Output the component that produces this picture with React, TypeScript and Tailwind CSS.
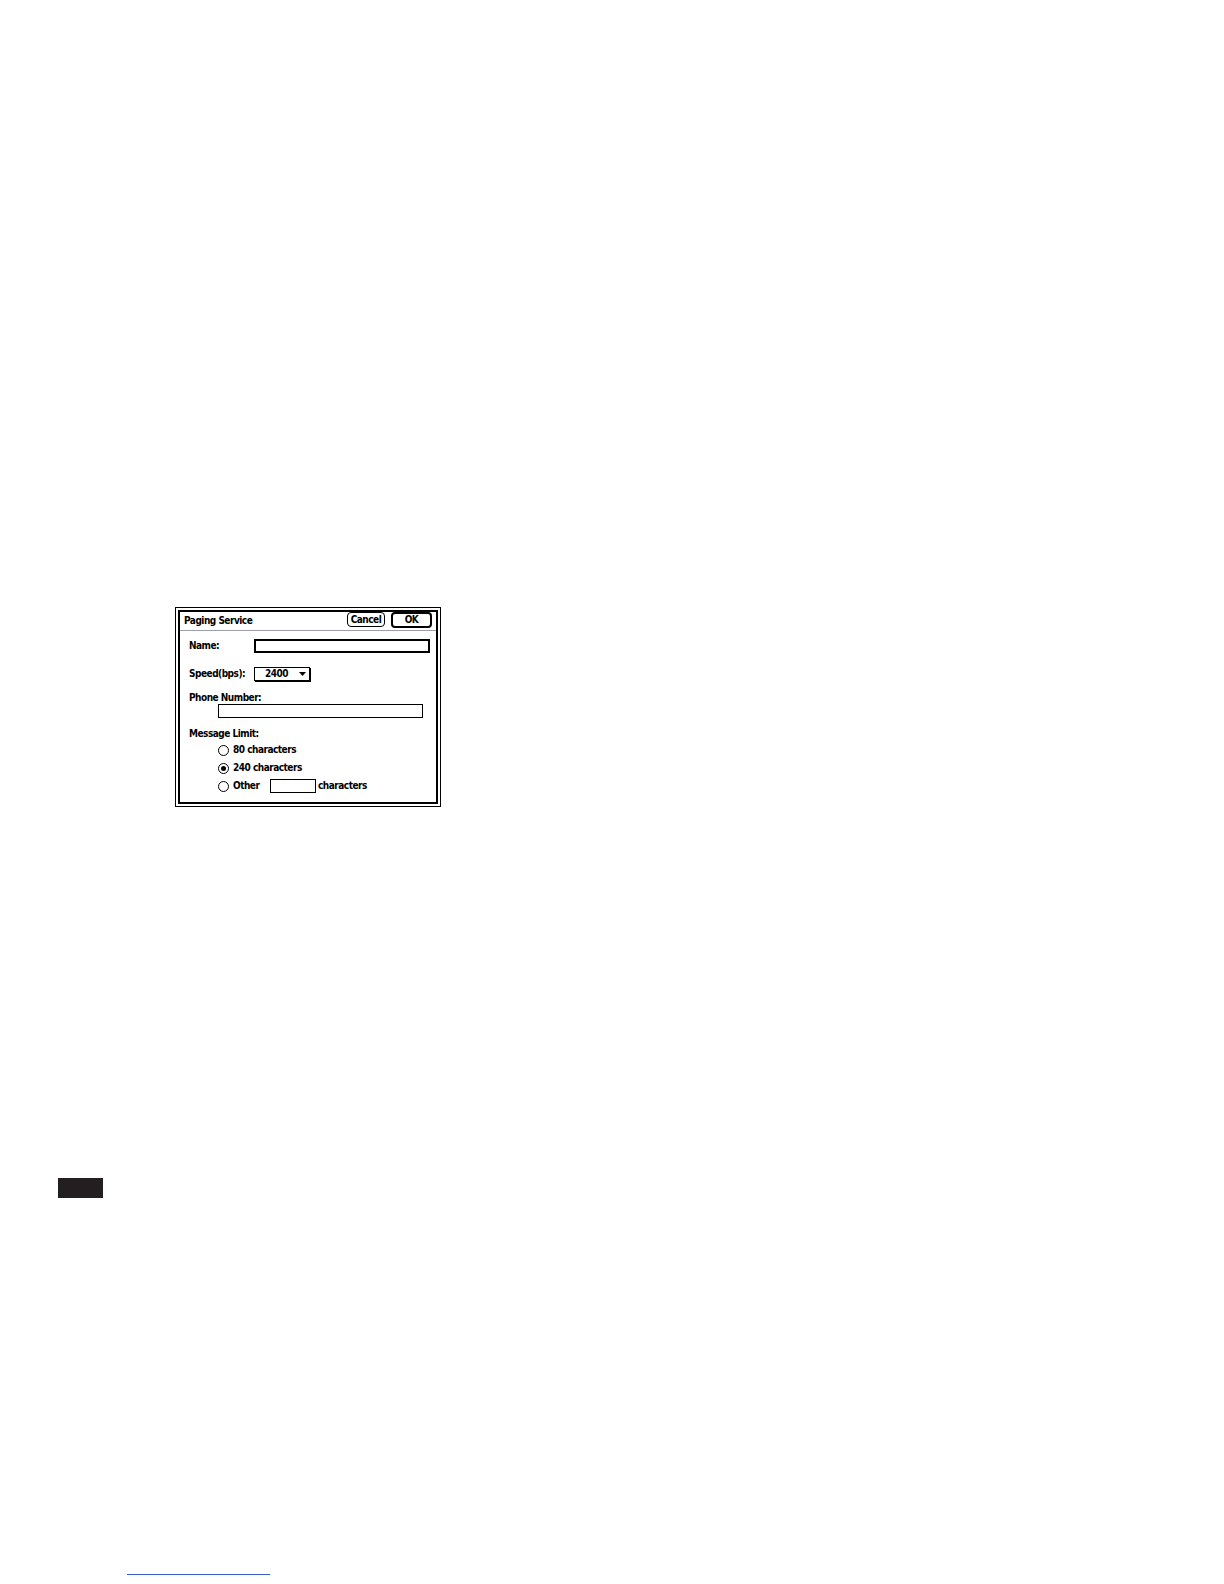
const font = "font-['DejaVu_Sans_Condensed','Liberation_Sans',Arial,sans-serif] font-stretch-condensed font-bold text-[10px] leading-[12px] tracking-[-0.5px] text-black";

function Radio({ checked }: { checked?: boolean }) {
  return (
    <span className="flex h-[11px] w-[11px] shrink-0 items-center justify-center rounded-full border border-black bg-white">
      {checked && <span className="h-[5px] w-[5px] rounded-full bg-black" />}
    </span>
  );
}

function PagingDialog() {
  return (
    <div className="h-[200px] w-[266px] border border-black bg-white p-[2px]">
      <div className={`flex h-full flex-col border-2 border-black ${font}`}>
        <div className="flex h-[19px] items-start justify-between border-b border-gray-400 pl-[4px] pr-[4px]">
          <span className="mt-[3px]">Paging Service</span>
          <div className="flex items-start">
            <div className="flex h-[15px] w-[38px] items-center justify-center rounded-[4px] border border-black">
              Cancel
            </div>
            <div className="ml-[6px] flex h-[16px] w-[41px] items-center justify-center rounded-[4px] border-2 border-black">
              OK
            </div>
          </div>
        </div>

        <div className="flex flex-col pl-[9px]">
          <div className="mt-[8px] flex items-center">
            <span className="w-[65px]">Name:</span>
            <div className="h-[14px] w-[176px] border-2 border-black" />
          </div>

          <div className="mt-[14px] flex items-center">
            <span className="w-[65px]">Speed(bps):</span>
            <div className="flex h-[14px] w-[56px] items-center justify-between border border-black pl-[10px] pr-[3px] shadow-[1px_1px_0_#000]">
              <span>2400</span>
              <svg width="7" height="4" viewBox="0 0 7 4">
                <path d="M0 0H7L3.5 4Z" fill="#000" />
              </svg>
            </div>
          </div>

          <span className="mt-[11px]">Phone Number:</span>
          <div className="ml-[29px] h-[14px] w-[205px] border border-black" />

          <span className="mt-[10px]">Message Limit:</span>

          <div className="ml-[29px] mt-[4px] flex flex-col gap-[6px]">
            <div className="flex h-[12px] items-center">
              <Radio />
              <span className="ml-[4px]">80 characters</span>
            </div>
            <div className="flex h-[12px] items-center">
              <Radio checked />
              <span className="ml-[4px]">240 characters</span>
            </div>
            <div className="flex h-[12px] items-center">
              <Radio />
              <span className="ml-[4px] w-[37px]">Other</span>
              <div className="h-[14px] w-[46px] border border-black" />
              <span className="ml-[2px]">characters</span>
            </div>
          </div>
        </div>
      </div>
    </div>
  );
}

export default function App() {
  return (
    <div className="min-h-screen bg-white">
      <div className="h-[607px]" />
      <div className="ml-[175px]">
        <PagingDialog />
      </div>
      <div className="ml-[58px] mt-[371px] h-[20px] w-[45px] bg-[#231f20]" />
      <div className="ml-[127px] mt-[376px] h-px w-[143px] bg-[#3a5bd0]" />
    </div>
  );
}
